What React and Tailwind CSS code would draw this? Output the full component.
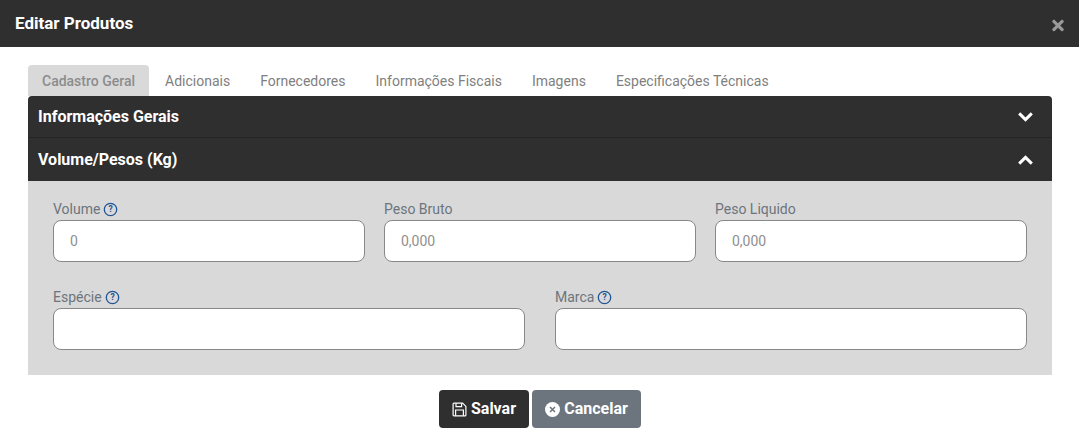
import React from "react";
import { FaTimes } from "react-icons/fa";

function Help() {
  return (
    <svg width="15" height="15" viewBox="0 0 15 15" className="shrink-0">
      <circle cx="7.5" cy="7.5" r="6.2" fill="none" stroke="#1f5496" strokeWidth="1.3" />
      <text x="7.5" y="10.4" textAnchor="middle" fontSize="8.5" fontWeight="700" fill="#1f5496" fontFamily="Roboto">?</text>
    </svg>
  );
}

function SaveIcon() {
  return (
    <svg width="15" height="15" viewBox="0 0 15 15" className="shrink-0" fill="none" stroke="white" strokeWidth="1.2">
      <path d="M1.1 2.1 a1 1 0 0 1 1-1 H10.6 L13.9 4.4 V12.9 a1 1 0 0 1 -1 1 H2.1 a1 1 0 0 1 -1-1 Z" />
      <path d="M4 1.2 V4.6 H9.6 V1.2" />
      <path d="M3.6 13.8 V8 H11.4 V13.8" />
    </svg>
  );
}

function CancelIcon() {
  return (
    <svg width="15" height="15" viewBox="0 0 15 15" className="shrink-0">
      <circle cx="7.5" cy="7.5" r="7.5" fill="white" />
      <path d="M5 5 L10 10 M10 5 L5 10" stroke="#6c757d" strokeWidth="1.5" />
    </svg>
  );
}

function Chevron({ up }) {
  return (
    <svg width="15" height="10" viewBox="0 0 15 10" className="shrink-0 mt-[1px]" fill="none" stroke="white" strokeWidth="3">
      <path d={up ? "M1.2 8.6 L7.5 2.4 L13.8 8.6" : "M1.2 1.4 L7.5 7.6 L13.8 1.4"} />
    </svg>
  );
}

function Field({ label, help, placeholder }) {
  return (
    <div className="flex flex-col min-w-0">
      <div className="flex items-center gap-[3px] h-[19px] pb-[2px] text-[14px] leading-[17px] text-[#6c757d]">
        <span>{label}</span>
        {help && <Help />}
      </div>
      <input
        readOnly
        placeholder={placeholder}
        className="w-full h-[42px] bg-white border border-[#888888] rounded-[8px] px-4 text-[14px] text-[#495057] placeholder:text-[#8f8f8f] outline-none"
      />
    </div>
  );
}

const tabs = ["Adicionais", "Fornecedores", "Informações Fiscais", "Imagens", "Especificações Técnicas"];

export default function App() {
  return (
    <div className="w-[1079px] h-[442px] bg-white overflow-hidden font-['Roboto',sans-serif]">
      <header className="h-[47px] bg-[#2f2f2f] flex items-center justify-between pl-[15px] pr-[15px]">
        <h1 className="text-[17px] font-bold text-white leading-[47px] mt-[-1px]">Editar Produtos</h1>
        <FaTimes className="text-[#9a9a9a] w-[12px] h-[17px] mt-[3px]" />
      </header>

      <main className="pt-[18px] px-[28px] w-[1052px] box-content">
        <nav className="flex h-[31px] items-stretch w-[1024px] text-[14px] text-[#808080]">
          <div className="bg-[#d9d9d9] rounded-t-[4px] px-[14px] pt-[2px] flex items-center font-medium text-[#8c8c8c] w-[121px] whitespace-nowrap">Cadastro Geral</div>
          <div className="flex items-center gap-[30px] pl-[16px] pt-[2px]">
            {tabs.map((t) => <span key={t} className="whitespace-nowrap">{t}</span>)}
          </div>
        </nav>

        <section className="w-[1024px]">
          <div className="h-[42px] bg-[#2f2f2f] rounded-t-[4px] border-b border-[#262626] flex items-center justify-between pl-[10px] pr-[19px]">
            <span className="text-[16px] font-bold text-white">Informações Gerais</span>
            <Chevron />
          </div>
          <div className="h-[43px] bg-[#2f2f2f] flex items-center justify-between pl-[10px] pr-[19px]">
            <span className="text-[16px] font-bold text-white">Volume/Pesos (Kg)</span>
            <Chevron up />
          </div>
          <div className="bg-[#d9d9d9] h-[194px] pt-[20px] px-[25px]">
            <div className="grid grid-cols-[312px_312px_312px] gap-x-[19px]">
              <Field label="Volume" help placeholder="0" />
              <Field label="Peso Bruto" placeholder="0,000" />
              <Field label="Peso Liquido" placeholder="0,000" />
            </div>
            <div className="grid grid-cols-[472px_472px] gap-x-[30px] mt-[27px]">
              <Field label="Espécie" help />
              <Field label="Marca" help />
            </div>
          </div>
        </section>

        <footer className="w-[1024px] flex justify-center gap-[3px] mt-[15px]">
          <button className="h-[38px] w-[90px] rounded-[4px] bg-[#2f2f2f] text-white text-[16px] font-bold flex items-center justify-center gap-[4px]">
            <SaveIcon />Salvar
          </button>
          <button className="h-[38px] w-[109px] rounded-[4px] bg-[#6c757d] text-white text-[16px] font-bold flex items-center justify-center gap-[4px]">
            <CancelIcon />Cancelar
          </button>
        </footer>
      </main>
    </div>
  );
}
